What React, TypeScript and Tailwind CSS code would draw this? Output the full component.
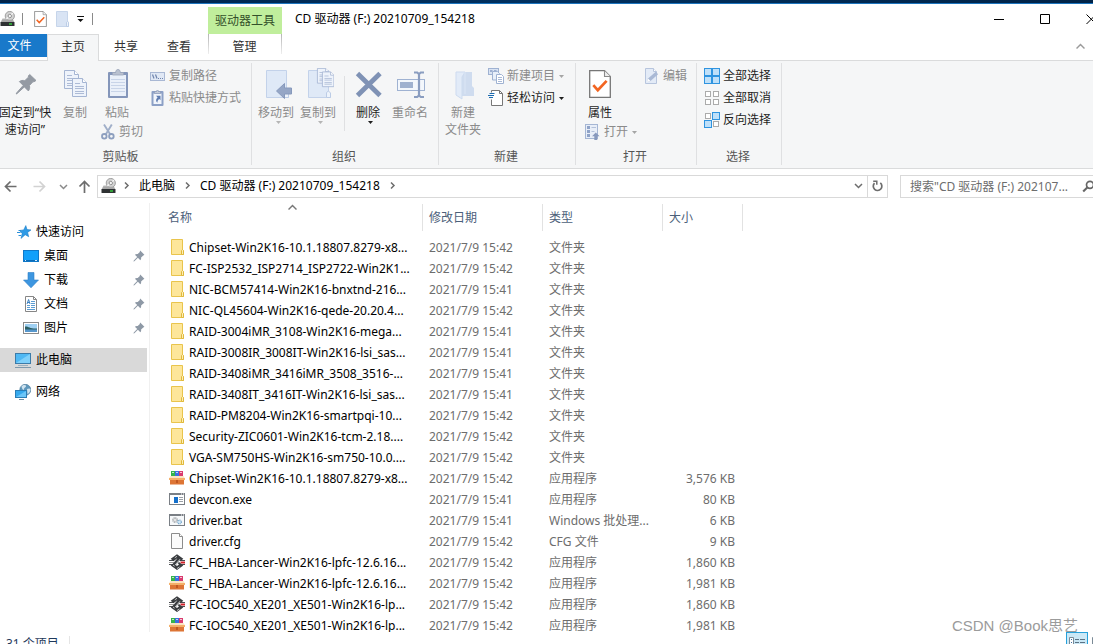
import React from "react";

type P = { children?: React.ReactNode };

/* ---------- icons ---------- */

const DriveIcon = () => (
  <svg width="15" height="16" viewBox="0 0 15 16" className="shrink-0">
    <path d="M2.5 7.5h10l2 4H.5z" fill="#b9b9b9" />
    <circle cx="9.8" cy="5" r="4.6" fill="#d2d2d2" stroke="#8f8f8f" strokeWidth=".8" />
    <path d="M9.8 5 13 2M9.8 5 6.4 8" stroke="#f5f5f5" strokeWidth="1.4" />
    <circle cx="9.8" cy="5" r="1.7" fill="#f7f7f7" stroke="#8a8a8a" strokeWidth=".9" />
    <path d="M2.6 8.8h9.8l1.9 2.7H.6z" fill="#a8a8a8" />
    <rect x=".5" y="11" width="14" height="4" rx=".6" fill="#2e3133" />
    <rect x="9" y="12.3" width="3" height="1.4" fill="#35d03c" />
  </svg>
);

const CheckDoc = ({ w, h }: { w: number; h: number }) => (
  <svg width={w} height={h} viewBox="0 0 22 28" className="shrink-0">
    <path d="M.7.7h14.8l5.8 5.8v20.8H.7z" fill="#fff" stroke="#767676" strokeWidth="1.3" />
    <path d="M15.5.7v5.8h5.8" fill="#eee" stroke="#8a8a8a" strokeWidth="1.1" />
    <path d="m4.3 15.2 4.5 5 8.8-9.3" fill="none" stroke="#f26522" strokeWidth="2.7" />
  </svg>
);

const PaleFolder = () => (
  <svg width="13" height="16" viewBox="0 0 13 16">
    <path d="M.5.5h11v10l1 .6v4.4H.5z" fill="#d9e4f4" stroke="#c6d5ea" />
    <path d="M10.5 15.5v-4.2l1-.8 1 .8v4.2z" fill="#eef3fa" stroke="#bccde6" />
  </svg>
);

const Caret = ({ color }: { color: string }) => (
  <svg width="5" height="3" viewBox="0 0 5 3" className="shrink-0">
    <path d="M0 0h5L2.5 3z" fill={color} />
  </svg>
);

const PinBig = () => (
  <svg width="32" height="32" viewBox="0 0 32 32">
    <path
      d="M20.7 6.500 27 12.500l-2.200 1.300-.7-.2-3.700 3.900c.6 2.200.2 4-1 5.400l-4-4L8 25.600l-.8.4.4-1 6.600-7.600-3.800-3.800c1.600-1.200 3.400-1.500 5.400-.9l3.800-3.700-.3-.9z"
      fill="#949aa3"
      stroke="#949aa3"
      strokeLinejoin="round"
    />
  </svg>
);

const PinSmall = () => (
  <svg width="12" height="12" viewBox="0 0 12 12" className="shrink-0">
    <path d="M7.2.600 11.400 4.800l-1.400.9L8.100 7.500c.2 1.200 0 2-.8 2.800L4.900 7.800l-3.500 3.400-1 .4.400-1 3.400-3.500L1.900 4.800c.8-.8 1.700-1 2.800-.8l1.900-1.800z" fill="#8e99a6" />
  </svg>
);

const page = (x: number, y: number) => (
  <g transform={`translate(${x} ${y})`}>
    <path d="M.5.5h10l4 4v14H.5z" fill="#eef3fb" stroke="#a5b5d3" />
    <path d="M10.5.5v4h4" fill="#fff" stroke="#a5b5d3" />
    <path d="M3 5.5h5M3 8.500h9M3 10.500h9M3 13.500h9M3 15.500h9" stroke="#adbbd6" />
  </g>
);

const CopyBig = () => (
  <svg width="32" height="32" viewBox="0 0 32 32">
    {page(5, 2)}
    {page(13, 10)}
  </svg>
);

const PasteBig = () => (
  <svg width="32" height="32" viewBox="0 0 32 32">
    <rect x="7" y="4" width="20" height="26" rx="1" fill="#8496ba" />
    <rect x="9" y="7" width="16" height="21" fill="#eaf0f9" />
    <path d="M10 11.500h14M10 14.500h14M10 17.500h14M10 20.500h14M10 23.500h14" stroke="#c8d4e8" />
    <path d="M11.500 7V4.500h3.200c0-2 .8-3 2.300-3s2.300 1 2.300 3h3.200V7z" fill="#b9c1cf" stroke="#9aa5ba" strokeWidth=".8" />
  </svg>
);

const PathIcon = () => (
  <svg width="16" height="16" viewBox="0 0 16 16">
    <rect x=".5" y="4.500" width="14" height="8" fill="#e0e8f5" stroke="#a9b8d4" />
    <path d="m2.500 6.500 1.500 4M5.500 6.500l1.500 4" stroke="#6f84ad" strokeWidth="1.200" />
    <path d="M8 10.500h1M10 10.500h1M12 10.500h1" stroke="#6f84ad" />
  </svg>
);

const PasteLink = () => (
  <svg width="16" height="16" viewBox="0 0 16 16">
    <rect x="1.500" y="1" width="12" height="15" rx="1" fill="#8ca0c6" />
    <rect x="3.500" y="3.500" width="8" height="10.500" fill="#f1f5fb" />
    <path d="M4.500 3.500v-2h2c0-1 .4-1.300 1-1.300s1 .3 1 1.300h2v2z" fill="#c3cad7" stroke="#8b9ab9" strokeWidth=".7" />
    <path d="M6 5.800h4.500v4.500L9.200 9C8 9.800 7.400 11 7.400 12.800 5.400 11 5.800 8.800 7.600 7.400z" fill="#5f7cb0" />
  </svg>
);

const Scissors = () => (
  <svg width="16" height="16" viewBox="0 0 16 16">
    <path d="M4 .5 10.300 10.500M11.800.500 5.700 10.500" stroke="#a0afc9" strokeWidth="1.900" />
    <circle cx="4.300" cy="12.300" r="2.300" fill="none" stroke="#8d9fbf" strokeWidth="1.800" />
    <circle cx="11.400" cy="12.300" r="2.300" fill="none" stroke="#8d9fbf" strokeWidth="1.800" />
  </svg>
);

const folderSheet = (
  <g>
    <path d="M6.500 2.500h20v21l2 2v4h-22z" fill="#dfe9f7" stroke="#c3d2ea" />
    <path d="M24.500 29.500v-5l2-1.500 2 2v4.500z" fill="#edf3fb" stroke="#bccce6" />
  </g>
);

const MoveTo = () => (
  <svg width="32" height="32" viewBox="0 0 32 32">
    {folderSheet}
    <path d="M16.500 23 24.500 15.500v4.500h7v6h-7v4.500z" fill="#95a6c6" stroke="#8799bc" />
  </svg>
);

const CopyTo = () => (
  <svg width="32" height="32" viewBox="0 0 32 32">
    {folderSheet}
    <g transform="translate(15 0) scale(.82)">{page(0, 0)}</g>
    <g transform="translate(20 3.500) scale(.82)">{page(0, 0)}</g>
  </svg>
);

const DeleteX = () => (
  <svg width="32" height="32" viewBox="0 0 32 32">
    <path d="M5.500 5.500 28 27.500M28 5.500 5.500 27.500" stroke="#7f92b5" strokeWidth="4.800" />
  </svg>
);

const Rename = () => (
  <svg width="32" height="32" viewBox="0 0 32 32">
    <rect x="3.500" y="11.500" width="27" height="11" fill="#f3f7fc" stroke="#9fb2d2" />
    <rect x="6" y="14" width="13" height="6" fill="#9fb1cf" />
    <path d="M20 4.500h3.200L25 6l1.800-1.500H30M20 29h3.200l1.800-1.500 1.800 1.500H30M25 5.500v22" fill="none" stroke="#8a9dc0" strokeWidth="2.200" />
  </svg>
);

const NewFolder = () => (
  <svg width="32" height="32" viewBox="0 0 32 32">
    <path d="M13 4h12v14l2 2v8H13z" fill="#cfdcef" />
    <path d="M9 4h9l-3 5v22L9 27z" fill="#e2ebf8" stroke="#cddbef" />
    <path d="M18 4v22" stroke="#dbe6f5" />
  </svg>
);

const NewItem = () => (
  <svg width="16" height="16" viewBox="0 0 16 16">
    <rect x=".5" y=".5" width="10" height="6" fill="#d9e3f3" stroke="#9fb2d2" />
    <path d="M2 3h2.500M6 3h2.500" stroke="#8ba0c6" strokeWidth="1.500" />
    <path d="M4.500 3.500h5l2 2v6.500h-7z" fill="#e9f0fa" stroke="#9fb2d2" />
    <path d="M8.500 6.500h5l2 2v7h-7z" fill="#fff" stroke="#9fb2d2" />
    <path d="M10 9.500h4M10 11.500h4M10 13.500h4" stroke="#a9b9d6" />
  </svg>
);

const EasyAccess = () => (
  <svg width="16" height="16" viewBox="0 0 16 16">
    <path d="M3.500 2.500v-2h8l3 3v12h-11v-6" fill="#fff" stroke="#777" />
    <path d="M11.500.5v3h3" fill="none" stroke="#777" />
    <path d="M1.500 3.500h5M0 5.500h6M1 7.500h4" stroke="#1c6bb0" />
  </svg>
);

const OpenIcon = () => (
  <svg width="16" height="16" viewBox="0 0 16 16">
    <rect x=".5" y=".5" width="12" height="14" fill="#e8eef8" stroke="#a5b6d4" />
    <rect x="2" y="2" width="3" height="3" fill="#8fa3c8" />
    <rect x="2" y="6" width="3" height="3" fill="#8fa3c8" />
    <rect x="2" y="10" width="3" height="3" fill="#8fa3c8" />
    <path d="M6.500 3.500H11M6.500 7.500h3" stroke="#b3c1da" />
    <path d="M10.800 8.500 14.600 12.200h-2.300V16h-3v-3.800H7z" fill="#8799bd" />
  </svg>
);

const EditIcon = () => (
  <svg width="16" height="16" viewBox="0 0 16 16">
    <path d="M1.500.5h8l3 3v12h-11z" fill="#e3ebf7" stroke="#b7c5dd" />
    <path d="M9.500.5v3h3" fill="#fff" stroke="#b7c5dd" />
    <path d="m3 14 1-3.500L11.800 3.700l2.300 2.600L6.500 13z" fill="#a9b9d5" />
    <path d="m3 14 1-3.500L6.500 13z" fill="#fff" />
  </svg>
);

const cells = [
  [0, 0],
  [1, 0],
  [0, 1],
  [1, 1],
];

const FourSquares = ({ kind }: { kind: "all" | "none" | "invert" }) => (
  <svg width="16" height="16" viewBox="0 0 16 16">
    {cells.map(([cx, cy]) => {
      const on = kind === "all" || (kind === "invert" && cx !== cy);
      return on ? (
        <rect key={`${cx}${cy}`} x={cx * 8 + 0.5} y={cy * 8 + 0.5} width="7" height="7" fill="#bfe0f9" stroke="#2f94e0" />
      ) : (
        <rect key={`${cx}${cy}`} x={cx * 8 + 1.5} y={cy * 8 + 1.5} width="5" height="5" fill="#fff" stroke="#ababab" />
      );
    })}
  </svg>
);

const Chevron = ({ dir, color = "#6d6d6d" }: { dir: "right" | "down" | "up"; color?: string }) => {
  const d = { right: "m3 1.500 3 3-3 3", down: "m1 3 3.500 3.500L8 3", up: "M.5 6.500 4.500 2.500l4 4" }[dir];
  return (
    <svg width="9" height="9" viewBox="0 0 9 9" className="shrink-0">
      <path d={d} fill="none" stroke={color} strokeWidth="1.500" />
    </svg>
  );
};

const Arrow = ({ dir, color }: { dir: "left" | "right" | "up"; color: string }) => {
  const d = {
    left: "M12.500 6.500H1.500M6.500 1.500l-5 5 5 5",
    right: "M.5 6.500h11M6.500 1.500l5 5-5 5",
    up: "M6.500 13V1.500M1.500 6.500l5-5 5 5",
  }[dir];
  return (
    <svg width="13" height="13" viewBox="0 0 13 13" className="shrink-0">
      <path d={d} fill="none" stroke={color} strokeWidth="1.700" />
    </svg>
  );
};

const StarIcon = () => (
  <svg width="14" height="14" viewBox="0 0 14 14">
    <path d="m8.800.600 1.200 4 4 .300-3.400 2.500 1.100 4.300-3.500-2-4.200 3.700 1.200-5L2.500 5.500l4.200-.600z" fill="#2f9be6" stroke="#1c7fc9" strokeWidth=".6" />
    <path d="M1.500 5.500H4M0 7.500h3.500M1.500 10.500H4" stroke="#2b8fd8" />
  </svg>
);

const DesktopIcon = () => (
  <svg width="16" height="16" viewBox="0 0 16 16">
    <rect x=".5" y="2.500" width="15" height="11" fill="#12a0fa" stroke="#0f78c8" />
    <path d="M1 12.500h14" stroke="#0b6cb8" />
    <path d="M2 12.500h1M12 12.500h2" stroke="#d5ecff" />
  </svg>
);

const DownloadIcon = () => (
  <svg width="16" height="16" viewBox="0 0 16 16">
    <path d="M5 .5h6v7.500h4.500L8 15.800.5 8H5z" fill="#3d96e0" stroke="#2f80c8" strokeWidth=".6" />
  </svg>
);

const DocumentIcon = () => (
  <svg width="16" height="16" viewBox="0 0 16 16">
    <path d="M2.500.5h8l3 3v12h-11z" fill="#fff" stroke="#868686" />
    <path d="M10.500.5v3h3" fill="none" stroke="#868686" />
    <path d="M8 5.500h4M8 7.500h4M4 9.500h3M8 9.500h4M4 11.500h3M8 11.500h4M4 13.500h8" stroke="#5c9dd3" />
    <path d="m4 8 1.600-4.500L7 8M4.500 6.500h2" fill="none" stroke="#3b7fc0" />
  </svg>
);

const PictureIcon = () => (
  <svg width="16" height="16" viewBox="0 0 16 16">
    <rect x=".5" y="2.500" width="15" height="11" fill="#fff" stroke="#8a8a8a" />
    <rect x="2" y="4" width="12" height="8" fill="#9fd0f2" />
    <path d="M2 6.500c3-.6 5 2.500 12 2V10H2z" fill="#2c5f62" />
    <path d="M2 9.500h12V12H2z" fill="#5797cc" />
  </svg>
);

const ComputerIcon = () => (
  <svg width="16" height="16" viewBox="0 0 16 16">
    <rect x=".5" y="1.500" width="15" height="10" fill="#4fb8f3" stroke="#3c7ba8" />
    <path d="M1 11 15 2v9z" fill="#7fd0fa" />
    <path d="M3 13.500h10" stroke="#9bb0be" />
    <path d="M0 15.500h16" stroke="#7d98ab" />
  </svg>
);

const NetworkIcon = () => (
  <svg width="16" height="16" viewBox="0 0 16 16">
    <circle cx="10.300" cy="5.800" r="5.500" fill="#5f97bb" stroke="#4d7c9c" strokeWidth=".7" />
    <path d="M6.500 2.500c2-2 3.500-1.500 4.500-1 .5 2-2.500 2-2 4.500-1 0-2-1-2.500-3.500zM12 5c2-1 3-.5 3.500 0 0 3-2 4.500-3 5z" fill="#cfe3ef" />
    <rect x=".5" y="6.500" width="11" height="7" fill="#35a9ee" stroke="#2b7db5" />
    <path d="M1 13 11 7v6z" fill="#6cc6f8" />
    <path d="M4 15.500h5" stroke="#7191a5" />
  </svg>
);

const FolderIcon = () => (
  <svg width="16" height="16" viewBox="0 0 16 16">
    <path d="M2.500.5h11v10l1 1v4h-12z" fill="#fde69a" stroke="#e9c44c" />
    <path d="M12.500 15.500v-4l1-1 1 1v4z" fill="#fdeeb5" stroke="#e0b93c" />
  </svg>
);

const ArchiveIcon = () => (
  <svg width="16" height="16" viewBox="0 0 16 16">
    <rect x="2" y="1" width="4" height="6" fill="#35b34a" />
    <rect x="6" y="1" width="4" height="6" fill="#3a6fe0" />
    <rect x="10" y="1" width="4" height="6" fill="#d93a6e" />
    <path d="M3 2.500h2M7 2.500h2M11 2.500h2" stroke="#fff" strokeOpacity=".7" />
    <path d="M1.500 6h13L16 8.500H0z" fill="#fbe3c0" />
    <rect x="0" y="8" width="16" height="2" fill="#f4b06a" />
    <rect x="1" y="10" width="14" height="4.500" fill="#dd7535" />
    <path d="M7.200 10h1.600v3H7.200z" fill="#b9501d" />
  </svg>
);

const ExeIcon = () => (
  <svg width="16" height="16" viewBox="0 0 16 16">
    <rect x=".5" y="2.500" width="15" height="11" fill="#fff" stroke="#7a7f85" />
    <path d="M0 3h16" stroke="#7a7f85" strokeWidth="2" />
    <path d="M12 3h1M14 3h1" stroke="#fff" />
    <rect x="5" y="6" width="4" height="6" fill="#1470cc" />
    <path d="M10 6.500h4M10 8.500h4M10 10.500h4" stroke="#9a9fa5" />
  </svg>
);

const BatIcon = () => (
  <svg width="16" height="16" viewBox="0 0 16 16">
    <rect x=".5" y="2.500" width="15" height="11" fill="#f6f8fa" stroke="#7a7f85" />
    <path d="M0 3h16" stroke="#7a7f85" strokeWidth="2" />
    <path d="M12 3h1M14 3h1" stroke="#fff" />
    <circle cx="6" cy="8" r="2.200" fill="#e5e5e5" stroke="#8f969c" strokeWidth="1.200" strokeDasharray="1 .6" />
    <circle cx="10.500" cy="10" r="1.900" fill="#cfe6f6" stroke="#7aa9cc" strokeWidth="1.200" strokeDasharray="1 .6" />
  </svg>
);

const BlankDoc = () => (
  <svg width="16" height="16" viewBox="0 0 16 16">
    <path d="M2.500.5h8l3 3v12h-11z" fill="#fbfbfb" stroke="#8c8c8c" />
    <path d="M10.500.5v3h3" fill="#fff" stroke="#8c8c8c" />
  </svg>
);

const KnotIcon = () => (
  <svg width="16" height="16" viewBox="0 0 16 16">
    <path d="M0 6.500h5M11 6.500h5M0 10.500h5M11 10.500h5" stroke="#4a4d50" />
    <path d="M0 8.500h5" stroke="#9a9a9a" />
    <path d="M11.500 8.500H16" stroke="#d0202a" strokeWidth="2" />
    <path d="M8 .3 14.300 4.800 11.500 7.200 8 4.500 4.500 7.200 1.700 4.800z" fill="#3a3d40" />
    <path d="M8 15.900 14.300 11.600 11.500 9.200 8 12 4.500 9.200 1.700 11.600z" fill="#3a3d40" />
    <path d="M10.200 4.500 4.800 11" stroke="#3a3d40" strokeWidth="3" />
    <path d="M5.800 3.800 8 2.300M10.500 13 8 14.500M11 5.200 6 11.200M4 11l1.500 1.200" stroke="#e4e4e4" strokeWidth=".8" />
    <path d="M9.500 8.500 11.500 11" stroke="#3a3d40" strokeWidth="2" />
  </svg>
);

/* ---------- ribbon parts ---------- */

const RibbonGroup = ({ title, width, children }: P & { title: string; width: string }) => (
  <section aria-label={title} className={`flex shrink-0 flex-col border-r border-[#dfe0e2] ${width}`}>
    <div className="flex h-[86px] items-start">{children}</div>
    <div className="pr-[2px] text-center leading-4 text-[#555]">{title}</div>
  </section>
);

const BigButton = ({
  icon,
  lines,
  width,
  caret,
  disabled,
}: {
  icon: React.ReactNode;
  lines: string[];
  width: string;
  caret?: boolean;
  disabled?: boolean;
}) => (
  <button
    type="button"
    disabled={disabled}
    className={`flex shrink-0 flex-col items-center pt-[5px] leading-[17px] whitespace-nowrap text-[#1e1e1e] disabled:text-[#8b8b8b] ${width}`}
  >
    <span className="mb-1 flex h-8 items-center">{icon}</span>
    {lines.map((l) => (
      <span key={l}>{l}</span>
    ))}
    {caret && (
      <span className="flex pl-1">
        <Caret color={disabled ? "#b5b5b5" : "#1e1e1e"} />
      </span>
    )}
  </button>
);

const SmallButton = ({
  icon,
  label,
  caret,
  disabled,
}: {
  icon: React.ReactNode;
  label: string;
  caret?: boolean;
  disabled?: boolean;
}) => (
  <button
    type="button"
    disabled={disabled}
    className="flex h-[22px] items-center gap-[3px] whitespace-nowrap text-[#1e1e1e] disabled:text-[#8b8b8b]"
  >
    <span className="w-4 shrink-0">{icon}</span>
    <span>{label}</span>
    {caret && (
      <span className="ml-px">
        <Caret color={disabled ? "#a5a5a5" : "#1e1e1e"} />
      </span>
    )}
  </button>
);

/* ---------- data ---------- */

const quickLinks = [
  { name: "桌面", icon: <DesktopIcon /> },
  { name: "下载", icon: <DownloadIcon /> },
  { name: "文档", icon: <DocumentIcon /> },
  { name: "图片", icon: <PictureIcon /> },
];

const dir = <FolderIcon />;
const rar = <ArchiveIcon />;
const knot = <KnotIcon />;

const files: [React.ReactNode, string, string, string, string][] = [
  [dir, "Chipset-Win2K16-10.1.18807.8279-x8...", "15:42", "文件夹", ""],
  [dir, "FC-ISP2532_ISP2714_ISP2722-Win2K1...", "15:42", "文件夹", ""],
  [dir, "NIC-BCM57414-Win2K16-bnxtnd-216...", "15:41", "文件夹", ""],
  [dir, "NIC-QL45604-Win2K16-qede-20.20.4...", "15:42", "文件夹", ""],
  [dir, "RAID-3004iMR_3108-Win2K16-mega...", "15:41", "文件夹", ""],
  [dir, "RAID-3008IR_3008IT-Win2K16-lsi_sas...", "15:41", "文件夹", ""],
  [dir, "RAID-3408iMR_3416iMR_3508_3516-...", "15:41", "文件夹", ""],
  [dir, "RAID-3408IT_3416IT-Win2K16-lsi_sas...", "15:41", "文件夹", ""],
  [dir, "RAID-PM8204-Win2K16-smartpqi-10...", "15:42", "文件夹", ""],
  [dir, "Security-ZIC0601-Win2K16-tcm-2.18....", "15:42", "文件夹", ""],
  [dir, "VGA-SM750HS-Win2K16-sm750-10.0....", "15:42", "文件夹", ""],
  [rar, "Chipset-Win2K16-10.1.18807.8279-x8...", "15:42", "应用程序", "3,576 KB"],
  [<ExeIcon />, "devcon.exe", "15:41", "应用程序", "80 KB"],
  [<BatIcon />, "driver.bat", "15:41", "Windows 批处理...", "6 KB"],
  [<BlankDoc />, "driver.cfg", "15:42", "CFG 文件", "9 KB"],
  [knot, "FC_HBA-Lancer-Win2K16-lpfc-12.6.16...", "15:42", "应用程序", "1,860 KB"],
  [rar, "FC_HBA-Lancer-Win2K16-lpfc-12.6.16...", "15:42", "应用程序", "1,981 KB"],
  [knot, "FC-IOC540_XE201_XE501-Win2K16-lp...", "15:42", "应用程序", "1,860 KB"],
  [rar, "FC-IOC540_XE201_XE501-Win2K16-lp...", "15:42", "应用程序", "1,981 KB"],
];

const columns = ["名称", "修改日期", "类型", "大小"];

/* ---------- page sections ---------- */

const TitleBar = () => (
  <header className="flex h-[34px] shrink-0 items-end">
    <div className="flex h-[30px] w-[208px] shrink-0 items-center">
      <DriveIcon />
      <span className="ml-[7px] h-3 w-px bg-[#8a8a8a]" />
      <button type="button" aria-label="属性" className="ml-[11px] w-[13px]">
        <CheckDoc w={13} h={16} />
      </button>
      <button type="button" aria-label="新建文件夹" className="ml-[9px] w-[13px]">
        <PaleFolder />
      </button>
      <button type="button" aria-label="自定义快速访问工具栏" className="ml-[7px]">
        <svg width="9" height="7" viewBox="0 0 9 7">
          <path d="M1 .5h7" stroke="#111" />
          <path d="M1.500 3h6l-3 3z" fill="#111" />
        </svg>
      </button>
      <span className="ml-[7px] h-3 w-px bg-[#8a8a8a]" />
    </div>
    <div className="flex h-[27px] w-[74px] shrink-0 items-center justify-center bg-[#c0ee9c] text-[#33502a]">
      驱动器工具
    </div>
    <h1 className="ml-[13px] h-[30px] flex-1 leading-[29px] text-black">CD 驱动器 (F:) 20210709_154218</h1>
    <div className="flex h-[30px]">
      {[
        { label: "最小化", d: "M0 5.500h10" },
        { label: "最大化", d: "M.5.500h9v9h-9z" },
        { label: "关闭", d: "m.5.500 9.500 9.500M10 .5.500 10" },
      ].map((b) => (
        <button key={b.label} type="button" aria-label={b.label} className="flex w-[46px] items-center justify-center pb-px">
          <svg width="10" height="10" viewBox="0 0 10 10">
            <path d={b.d} fill="none" stroke="#000" />
          </svg>
        </button>
      ))}
    </div>
  </header>
);

const Tabs = () => (
  <div role="tablist" className="flex h-[27px] shrink-0 items-start border-b border-[#dadbdc] text-[#333]">
    <button type="button" className="h-[23px] w-[47px] bg-[#1979ca] pt-px pr-2 text-white">
      文件
    </button>
    <button
      type="button"
      role="tab"
      aria-selected="true"
      className="h-[27px] w-[52px] border-x border-t border-[#dadbdc] bg-[#f5f6f7] pb-[2px]"
    >
      主页
    </button>
    <button type="button" role="tab" aria-selected="false" className="h-[26px] w-[54px]">
      共享
    </button>
    <button type="button" role="tab" aria-selected="false" className="h-[26px] w-[52px]">
      查看
    </button>
    <span className="ml-[3px] h-5 w-px bg-linear-to-b from-[#b5b5b5] to-[#eee]" />
    <button type="button" role="tab" aria-selected="false" className="h-[26px] w-[72px] pr-px">
      管理
    </button>
    <span className="h-5 w-px bg-linear-to-b from-[#b5b5b5] to-[#eee]" />
    <button type="button" aria-label="最小化功能区" className="mt-2 mr-[29px] ml-auto">
      <Chevron dir="up" color="#9a9a9a" />
    </button>
  </div>
);

const Ribbon = () => (
  <div className="flex h-[108px] shrink-0 border-b border-[#dadbdc] bg-[#f5f6f7] pt-[2px] pb-[3px]">
    <RibbonGroup title="剪贴板" width="w-[252px] [&>div:last-child]:pr-[10px]">
      <BigButton icon={<PinBig />} lines={["固定到“快", "速访问”"]} width="w-[50px]" />
      <BigButton icon={<CopyBig />} lines={["复制"]} width="w-[50px]" disabled />
      <div className="w-[50px] shrink-0">
        <BigButton icon={<PasteBig />} lines={["粘贴"]} width="w-[34px]" disabled />
        <SmallButton icon={<Scissors />} label="剪切" disabled />
      </div>
      <div className="pt-[2px]">
        <SmallButton icon={<PathIcon />} label="复制路径" disabled />
        <SmallButton icon={<PasteLink />} label="粘贴快捷方式" disabled />
      </div>
    </RibbonGroup>
    <RibbonGroup title="组织" width="w-[187px]">
      <span className="w-[3px]" />
      <BigButton icon={<MoveTo />} lines={["移动到"]} width="w-[42px]" caret disabled />
      <BigButton icon={<CopyTo />} lines={["复制到"]} width="w-[42px]" caret disabled />
      <span className="mt-[13px] ml-[5px] h-[55px] w-px bg-[#dfe0e2]" />
      <BigButton icon={<DeleteX />} lines={["删除"]} width="w-[46px]" caret />
      <BigButton icon={<Rename />} lines={["重命名"]} width="w-[38px]" disabled />
    </RibbonGroup>
    <RibbonGroup title="新建" width="w-[137px]">
      <BigButton icon={<NewFolder />} lines={["新建", "文件夹"]} width="w-[48px]" disabled />
      <div className="pt-[2px] pl-px">
        <SmallButton icon={<NewItem />} label="新建项目" caret disabled />
        <SmallButton icon={<EasyAccess />} label="轻松访问" caret />
      </div>
    </RibbonGroup>
    <RibbonGroup title="打开" width="w-[121px]">
      <div className="w-[68px] shrink-0">
        <BigButton icon={<CheckDoc w={22} h={28} />} lines={["属性"]} width="w-[48px]" />
        <div className="pl-[9px]">
          <SmallButton icon={<OpenIcon />} label="打开" caret disabled />
        </div>
      </div>
      <div className="pt-[2px]">
        <SmallButton icon={<EditIcon />} label="编辑" disabled />
      </div>
    </RibbonGroup>
    <RibbonGroup title="选择" width="w-[85px]">
      <div className="pt-[2px] pl-[7px]">
        <SmallButton icon={<FourSquares kind="all" />} label="全部选择" />
        <SmallButton icon={<FourSquares kind="none" />} label="全部取消" />
        <SmallButton icon={<FourSquares kind="invert" />} label="反向选择" />
      </div>
    </RibbonGroup>
  </div>
);

const AddressBar = () => (
  <div className="flex h-[34px] shrink-0 items-center">
    <div className="flex w-[97px] shrink-0 items-center">
      <button type="button" aria-label="后退" className="ml-1">
        <Arrow dir="left" color="#6d6d6d" />
      </button>
      <button type="button" aria-label="前进" disabled className="ml-4">
        <Arrow dir="right" color="#d2d2d2" />
      </button>
      <button type="button" aria-label="最近浏览的位置" className="ml-[13px]">
        <Chevron dir="down" color="#8a8a8a" />
      </button>
      <button type="button" aria-label="上移" className="ml-[10px]">
        <Arrow dir="up" color="#6d6d6d" />
      </button>
    </div>
    <div className="flex h-[23px] flex-1 items-center border border-[#d9d9d9] pb-px">
      <span className="mr-[6px] ml-[3px]">
        <DriveIcon />
      </span>
      <Chevron dir="right" />
      <a href="#computer" className="mx-2 text-black">
        此电脑
      </a>
      <Chevron dir="right" />
      <a href="#drive" className="mx-2 text-black">
        CD 驱动器 (F:) 20210709_154218
      </a>
      <Chevron dir="right" />
      <button type="button" aria-label="以前的位置" className="mr-1 ml-auto">
        <Chevron dir="down" />
      </button>
      <button type="button" aria-label="刷新" className="-mb-px flex h-[21px] w-5 items-center justify-center border-l border-[#d9d9d9]">
        <svg width="11" height="12" viewBox="0 0 11 12">
          <path d="M2.500 3.200A4.300 4.300 0 1 0 8.300 2.900" fill="none" stroke="#6d6d6d" strokeWidth="1.700" />
          <path d="M1.200 1.200h3.600v3.600" fill="none" stroke="#6d6d6d" strokeWidth="1.500" />
        </svg>
      </button>
    </div>
    <div className="mr-[7px] ml-3 flex h-[23px] w-[207px] shrink-0 items-center border border-[#d9d9d9] pl-[9px]">
      <label htmlFor="search" className="sr-only">
        搜索
      </label>
      <input
        id="search"
        type="text"
        placeholder={'搜索"CD 驱动器 (F:) 202107...'}
        className="h-[21px] w-[172px] shrink-0 bg-transparent leading-[21px] outline-none placeholder:text-[#6d6d6d]"
      />
      <svg width="13" height="13" viewBox="0 0 13 13" className="shrink-0">
        <circle cx="8" cy="4.800" r="3.500" fill="none" stroke="#666" strokeWidth="1.700" />
        <path d="M5.500 7.300 1.200 11.600" stroke="#666" strokeWidth="2.100" />
      </svg>
    </div>
  </div>
);

const Sidebar = () => (
  <nav aria-label="导航窗格" className="w-[150px] shrink-0 border-r border-[#f0f0f0] pt-[17px] text-black">
    <a href="#quick" className="flex h-6 items-center pl-[17px]">
      <StarIcon />
      <span className="ml-[5px]">快速访问</span>
    </a>
    {quickLinks.map((l) => (
      <a key={l.name} href={`#${l.name}`} className="flex h-6 items-center pr-1 pl-[23px]">
        {l.icon}
        <span className="ml-[5px] flex-1">{l.name}</span>
        <PinSmall />
      </a>
    ))}
    <a href="#computer" aria-current="true" className="mt-2 mr-[2px] flex h-6 items-center bg-[#d9d9d9] pl-[15px]">
      <ComputerIcon />
      <span className="ml-[5px]">此电脑</span>
    </a>
    <a href="#network" className="mt-2 flex h-6 items-center pl-[15px]">
      <NetworkIcon />
      <span className="ml-[5px]">网络</span>
    </a>
  </nav>
);

const FileList = () => (
  <main className="relative min-w-0 flex-1 overflow-hidden">
    <table className="w-full table-fixed border-collapse text-left whitespace-nowrap">
      <colgroup>
        <col className="w-[273px]" />
        <col className="w-[120px]" />
        <col className="w-[120px]" />
        <col className="w-[80px]" />
        <col />
      </colgroup>
      <thead>
        <tr>
          {columns.map((c, i) => (
            <th key={c} scope="col" aria-sort={i === 0 ? "ascending" : undefined} className="p-0 pt-px pb-[6px] font-normal">
              <button
                type="button"
                className={`block h-[27px] w-full border-r border-[#e2e2e2] text-left text-[#4c607a] ${i === 0 ? "pl-[18px]" : "pl-[6px]"}`}
              >
                {c}
              </button>
            </th>
          ))}
          <td />
        </tr>
      </thead>
      <tbody>
        {files.map(([icon, name, time, type, size], i) => (
          <tr key={i} className="h-[21px] text-[#6d6d6d]">
            <td className="p-0 pl-[19px]">
              <span className="flex h-[21px] items-center gap-1 text-black">
                <span className="w-4 shrink-0 pb-px">{icon}</span>
                {name}
              </span>
            </td>
            <td className="p-0 pl-[6px]">2021/7/9 {time}</td>
            <td className="p-0 pl-[6px]">{type}</td>
            <td className="p-0 pr-2 text-right">{size}</td>
            <td />
          </tr>
        ))}
      </tbody>
    </table>
    <span className="absolute top-0 left-[138px]">
      <Chevron dir="up" color="#777" />
    </span>
  </main>
);

const StatusBar = () => (
  <footer className="flex h-[23px] shrink-0 items-center text-[#1e395b]">
    <span className="w-[69px] pl-[6px]">31 个项目</span>
    <span className="h-4 w-px bg-[#e5e5e5]" />
    <button
      type="button"
      aria-label="详细信息"
      className="mr-[4px] ml-auto flex h-full w-[22px] justify-center border border-[#26a0da] bg-[#cbe8f6] pt-1"
    >
      <svg width="16" height="12" viewBox="0 0 16 12">
        <path d="M.5.5h4v11h-4z" fill="#fff" stroke="#7a8a96" />
        <path d="M2 2.500h1M2 5.500h1M2 8.500h1" stroke="#3f6fa0" />
        <path d="M6 2.500h4M11 2.500h5M6 5.500h4M11 5.500h5M6 8.500h4M11 8.500h5" stroke="#5c7385" />
      </svg>
    </button>
    <button type="button" aria-label="大缩略图" className="mr-[6px] flex h-full w-4 pt-[5px]">
      <svg width="16" height="12" viewBox="0 0 16 12">
        <path d="M.5.5h14v11H.5z" fill="#dcebf5" stroke="#7a8a96" />
      </svg>
    </button>
  </footer>
);

export default function App() {
  return (
    <div className="relative h-screen overflow-hidden bg-white font-['Noto_Sans','Noto_Sans_CJK_SC',sans-serif] text-[12px] leading-4">
      <div className="absolute inset-x-0 top-0 h-1 border-b border-[#1c74bd] bg-linear-to-r from-[#00234a] via-[#003160] to-[#002347]" />
      {/* The window is slightly larger than the screen, so its right and bottom edges run off. */}
      <div className="flex h-[calc(100%+11px)] w-[calc(100%+21px)] flex-col">
        <TitleBar />
        <Tabs />
        <Ribbon />
        <AddressBar />
        <div className="flex min-h-0 flex-1 overflow-hidden">
          <Sidebar />
          <FileList />
        </div>
        <StatusBar />
      </div>
      <div className="pointer-events-none absolute right-[15px] bottom-[6px] font-['Liberation_Sans','Noto_Sans_CJK_SC',sans-serif] text-[15px] leading-6 text-[#9b9b9b]">
        CSDN @Book思艺
      </div>
    </div>
  );
}
